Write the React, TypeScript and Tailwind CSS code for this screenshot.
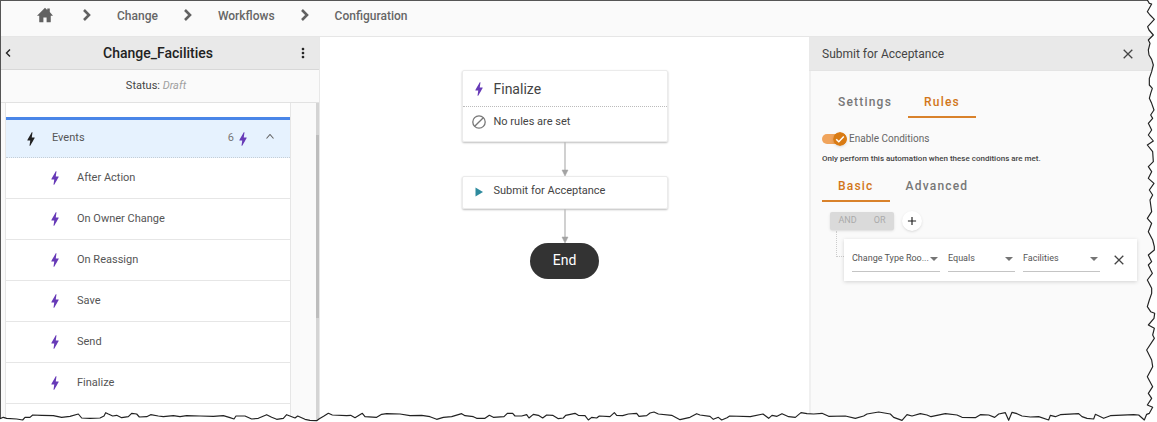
import { useState } from 'react';
import type { ReactNode } from 'react';
import { MdAdd, MdBolt, MdClose, MdMoreVert } from 'react-icons/md';

const events = ['After Action', 'On Owner Change', 'On Reassign', 'Save', 'Send', 'Finalize'];
const crumbs = ['Change', 'Workflows', 'Configuration'];

// Torn paper outline, three units to a pixel
const tornBottom =
    '0,1256 10,1252 20,1255 50,1257 68,1260 75,1252 90,1252 98,1245 125,1246 160,1247 185,1252 210,1249 235,1242 245,1254 270,1255 300,1254 312,1248 317,1238 325,1242 338,1248 350,1246 365,1253 385,1250 395,1240 410,1242 418,1251 440,1250 452,1244 475,1248 490,1250 520,1247 540,1250 560,1247 600,1248 640,1249 670,1247 690,1253 702,1257 708,1248 735,1248 755,1257 775,1255 800,1244 815,1252 830,1258 850,1255 860,1244 885,1254 893,1248 ' +
    '915,1258 930,1261 950,1262 958,1256 972,1248 985,1240 997,1245 1040,1247 1052,1246 1065,1253 1087,1240 1095,1250 1130,1252 1145,1243 1160,1241 1200,1242 1230,1247 1265,1246 1290,1250 1310,1258 1330,1252 1355,1250 1385,1241 1395,1247 1420,1250 1430,1255 1455,1255 1468,1246 1480,1252 1512,1250 1522,1240 1538,1240 1545,1248 1565,1248 1580,1244 1587,1254 1600,1243 1615,1246 1628,1254 1640,1245 1658,1246 1675,1256 1690,1254 1697,1246 1725,1240 1735,1246 1755,1247 1765,1260 1775,1252 1790,1254 1798,1248 1830,1250 1843,1238 1850,1246 1868,1247 1885,1242 1910,1240 1917,1249 1940,1247 1950,1239 1962,1236 1975,1242 2015,1246 2040,1259 2070,1252 2090,1241 2100,1245 2130,1249 2140,1258 2155,1252 2165,1260 ' +
    '2181,1253 2189,1248 2251,1250 2289,1242 2306,1255 2316,1246 2331,1249 2346,1241 2366,1250 2386,1252 2403,1238 2421,1241 2441,1242 2466,1240 2486,1249 2536,1248 2566,1255 2591,1248 2601,1242 2636,1236 2671,1242 2681,1252 2706,1261 2721,1244 2736,1248 2761,1241 2781,1245 2793,1250 2836,1241 2871,1245 2886,1252 2926,1253 2941,1244 2966,1245 2984,1252 2996,1242 3016,1238 3026,1261 3036,1237 3051,1241 3066,1248 3091,1251 3116,1250 3146,1260 3151,1246 3166,1250 3181,1244 3236,1241 3246,1250 3261,1255 3281,1257 3286,1243 3311,1255 3331,1247 3401,1244 3416,1245 3433,1260';
const tornRight =
    '3440,1243 3448,1240 3458,1222 3442,1215 3455,1195 3445,1180 3458,1160 3442,1130 3458,1100 3455,1080 3440,1050 3463,1015 3458,1005 3463,985 3445,975 3462,955 3464,940 3452,935 3442,920 3448,900 3455,880 3455,865 3442,840 3457,820 3452,810 3445,795 3455,785 3445,765 3463,750 3463,740 3458,720 3445,695 3455,670 3442,655 3455,635 3450,600 ' +
    '3458,585 3448,570 3462,550 3445,535 3455,515 3445,500 3460,485 3458,455 3442,435 3460,423 3445,405 3455,390 3445,370 3458,355 3452,345 3462,330 3455,310 3448,295 3452,280 3457,265 3448,255 3448,235 3455,215 3460,195 3455,178 3447,165 3445,150 3450,130 3445,120 3460,105 3447,90 3443,80 3452,70 3463,58 3450,45 3442,35 3455,12 3448,10 3442,0';

const TornEdge = () => (
    <svg viewBox="0 0 3471 1266" preserveAspectRatio="none" className="absolute inset-0 h-full w-full pointer-events-none" aria-hidden="true">
        <polygon points={`0,1266 ${tornBottom} ${tornRight} 3471,0 3471,1266`} fill="#fff" />
        <polyline points={`${tornBottom} ${tornRight}`} fill="none" stroke="#222" strokeWidth="3.5" strokeLinejoin="round" />
    </svg>
);

const HomeIcon = () => (
    <svg viewBox="0 0 50 46" className="h-4 w-4" fill="#616161">
        <path d="M25 0 0 25h7v19q0 2 2 2h11V31h10v15h11q2 0 2-2V25h7L40 14V3h-8v4z" />
    </svg>
);

const Chevron = () => (
    <svg viewBox="0 0 8 12" className="h-3 w-2" fill="none" stroke="#616161" strokeWidth="2.6">
        <path d="m1 1 5 5-5 5" />
    </svg>
);

const Arrow = () => (
    <svg viewBox="0 0 8 34" className="h-[34px] w-2 shrink-0">
        <path d="M4 0v28" stroke="#bdbdbd" strokeWidth="1.4" />
        <path d="M1 28h6l-3 6z" fill="#a3a3a3" stroke="#a3a3a3" strokeWidth=".5" />
    </svg>
);

const CloseIcon = () => (
    <svg viewBox="0 0 10 10" className="h-[10px] w-[10px]" fill="none" stroke="#444" strokeWidth="1.3">
        <path d="m.7.7 8.600 8.600M9.300.7.7 9.300" />
    </svg>
);

const Breadcrumbs = () => (
    <nav className="flex h-9 shrink-0 items-center border-b border-[#e6e6e6] bg-[#fafafa] pb-2 pl-9 text-xs font-medium text-[#666]">
        <a href="#home" aria-label="Home" className="mr-1">
            <HomeIcon />
        </a>
        <ol className="flex items-center">
            {crumbs.map((crumb) => (
                <li key={crumb} className="flex items-center">
                    <span className="mr-[26px] ml-[26px]">
                        <Chevron />
                    </span>
                    <a href={`#${crumb}`} className="pt-[2px]">
                        {crumb}
                    </a>
                </li>
            ))}
        </ol>
    </nav>
);

const Sidebar = () => (
    <aside className="flex w-[319px] shrink-0 flex-col border-r border-[#e8e8e8] bg-[#fafafa]">
        <div className="flex h-[33px] shrink-0 items-center justify-between border-b border-[#d8d8d8] bg-[#e9e9e9] pr-2 pl-1 text-[#222]">
            <button type="button" aria-label="Back" className="w-4">
                <svg viewBox="0 0 6 8" className="h-2 w-[6px]" fill="none" stroke="#222" strokeWidth="1.4">
                    <path d="M5 .5 1.5 4 5 7.5" />
                </svg>
            </button>
            <h1 className="text-sm font-medium">Change_Facilities</h1>
            <button type="button" aria-label="More options">
                <MdMoreVert size={16} />
            </button>
        </div>
        <p className="h-[33px] shrink-0 border-b border-[#e2e2e2] pr-2 text-center text-[11px] leading-8 text-[#444]">
            Status: <em className="text-[#a0a0a0]">Draft</em>
        </p>
        <div className="flex min-h-0 grow justify-between overflow-hidden pl-1">
            <div className="w-[286px] border-x border-[#e6e6e6] bg-white text-[11px] text-[#555]">
                <div className="h-[14px]" />
                <button type="button" aria-expanded="true" className="flex h-[41px] w-full items-center border-t-3 border-b border-t-[#4a86e8] border-b-[#c5ced6] bg-[#e6f2fe] pr-4 pl-4 [border-bottom-style:dotted]">
                    <MdBolt size={18} className="text-[#222]" />
                    <span className="ml-3 grow text-left">Events</span>
                    <span className="text-[#777]">6</span>
                    <MdBolt size={18} className="mr-[14px] text-[#673ab7]" />
                    <svg viewBox="0 0 8 5" className="mb-1 h-[5px] w-2" fill="none" stroke="#666" strokeWidth="1.1">
                        <path d="m.5 4.5 3.5-4 3.5 4" />
                    </svg>
                </button>
                <ul>
                    {events.map((event) => (
                        <li key={event} className="flex h-[41px] items-center border-b border-[#e6e6e6] pl-10">
                            <MdBolt size={18} className="text-[#673ab7]" />
                            <span className="ml-[13px]">{event}</span>
                        </li>
                    ))}
                </ul>
            </div>
            <div className="w-[3px] bg-[#d4d4d4] pt-8">
                <div className="h-[183px] bg-[#bdbdbd]" />
            </div>
        </div>
    </aside>
);

const Canvas = () => (
    <main className="flex min-w-0 grow flex-col items-center bg-white pt-[33px] text-[11px] text-[#444]">
        <section className="w-[206px] rounded-xs border border-[#ebebeb] shadow-[0_1px_2px_rgba(0,0,0,0.25)]">
            <div className="flex h-9 items-center border-b border-dotted border-[#bbb] pl-[7px]">
                <MdBolt size={18} className="text-[#673ab7]" />
                <h2 className="ml-[6px] text-sm">Finalize</h2>
            </div>
            <div className="flex h-[34px] items-center pb-1 pl-[9px]">
                <svg viewBox="0 0 14 14" className="h-[14px] w-[14px]" fill="none" stroke="#777" strokeWidth="1.3">
                    <circle cx="7" cy="7" r="6.2" />
                    <path d="m2.7 11.3 8.6-8.6" />
                </svg>
                <span className="ml-2">No rules are set</span>
            </div>
        </section>
        <Arrow />
        <section className="flex h-[33px] w-[206px] items-center rounded-xs border border-[#ebebeb] pb-[2px] pl-3 shadow-[0_1px_2px_rgba(0,0,0,0.25)]">
            <svg viewBox="0 0 8 10" className="h-[10px] w-2" fill="#2e8b9e">
                <path d="M.5.5 8 5 .5 9.500z" />
            </svg>
            <span className="ml-[11px]">Submit for Acceptance</span>
        </section>
        <Arrow />
        <div className="flex h-9 w-[69px] shrink-0 items-center justify-center rounded-full bg-[#333] pb-[2px] text-sm text-white">End</div>
    </main>
);

interface TabsProps {
    tabs: string[];
    initial: string;
}

const Tabs = ({ tabs, initial }: TabsProps) => {
    const [active, setActive] = useState(initial);
    return (
        <div role="tablist" className="flex text-xs font-medium tracking-widest">
            {tabs.map((tab) => (
                <button
                    key={tab}
                    type="button"
                    role="tab"
                    aria-selected={tab === active}
                    onClick={() => setActive(tab)}
                    className={`h-[31px] border-b-2 px-4 ${tab === active ? 'border-[#d9822b] text-[#d27619]' : 'border-transparent text-[#777]'}`}
                >
                    {tab}
                </button>
            ))}
        </div>
    );
};

interface FieldProps {
    label: string;
    value: string;
    width: string;
}

const Field = ({ label, value, width }: FieldProps) => (
    <label className={`flex shrink-0 items-center border-b border-[#c4c4c4] pb-[2px] ${width}`}>
        <select aria-label={label} defaultValue={value} className="h-5 min-w-0 grow appearance-none text-[9px] text-[#555] outline-none">
            <option>{value}</option>
        </select>
        <svg viewBox="0 0 8 4" className="mr-[2px] h-1 w-2 shrink-0" fill="#757575">
            <path d="M0 0h8L4 4z" />
        </svg>
    </label>
);

const Switch = ({ children }: { children: ReactNode }) => {
    const [checked, setChecked] = useState(true);
    return (
        <label className="flex items-center gap-[2px] text-[10px] leading-4 text-[#666]">
            <input type="checkbox" className="sr-only" checked={checked} onChange={(e) => setChecked(e.target.checked)} />
            <span className={`flex h-[10px] w-[25px] items-center rounded-full ${checked ? 'justify-end bg-[#f0a45c]' : 'bg-[#bbb]'}`}>
                <svg viewBox="0 0 14 14" className="h-[14px] w-[14px] shrink-0 rounded-full shadow">
                    <circle cx="7" cy="7" r="7" fill={checked ? '#d97b14' : '#fafafa'} />
                    {checked && <path d="m3.200 7.200 2.600 2.600 5-5.200" fill="none" stroke="#fff" strokeWidth="1.500" />}
                </svg>
            </span>
            {children}
        </label>
    );
};

const RulesPanel = () => (
    <aside className="w-[348px] shrink-0 bg-[#fafafa]">
        <div className="flex h-[34px] items-center justify-between border-b border-[#e4e4e4] bg-[#e9e9e9] pr-6 pl-[13px] text-[#444]">
            <h2 className="text-xs">Submit for Acceptance</h2>
            <button type="button" aria-label="Close">
                <CloseIcon />
            </button>
        </div>
        <div className="h-full border-l-2 border-[#f0f0f0] pt-4 pl-[11px]">
            <Tabs tabs={['Settings', 'Rules']} initial="Rules" />
            <div className="pt-[13px]">
                <Switch>Enable Conditions</Switch>
            </div>
            <p className="mt-1 text-[8px] leading-4 font-medium text-[#444]">Only perform this automation when these conditions are met.</p>
            <div className="pt-1">
                <Tabs tabs={['Basic', 'Advanced']} initial="Basic" />
            </div>
            <div className="mt-[9px] flex items-center gap-2 pl-2">
                <div className="flex h-[18px] w-16 items-center justify-around rounded-xs bg-[#dadada] text-[9px] text-[#aaa] shadow">
                    <button type="button" disabled>
                        AND
                    </button>
                    <button type="button" disabled>
                        OR
                    </button>
                </div>
                <button type="button" aria-label="Add condition" className="flex h-5 w-5 items-center justify-center rounded-full bg-white text-[#222] shadow">
                    <MdAdd size={14} />
                </button>
            </div>
            <div className="flex pl-[14px]">
                <div className="h-[26px] w-2 border-b border-l border-dotted border-[#ccc]" />
                <div className="mt-2 flex h-[42px] w-[293px] items-center gap-2 bg-white pl-2 shadow-[0_1px_4px_rgba(0,0,0,0.16)]">
                    <Field label="Attribute" value="Change Type Roo..." width="w-[88px]" />
                    <Field label="Operator" value="Equals" width="w-[67px]" />
                    <Field label="Value" value="Facilities" width="w-[77px]" />
                    <button type="button" aria-label="Remove condition" className="ml-[6px]">
                        <CloseIcon />
                    </button>
                </div>
            </div>
        </div>
    </aside>
);

const App = () => (
    <div className="relative h-screen overflow-hidden bg-white font-['Roboto','Liberation_Sans',sans-serif]">
        <div className="flex h-full flex-col border-t border-l border-[#555]">
            <Breadcrumbs />
            <div className="flex min-h-0 grow overflow-hidden">
                <Sidebar />
                <Canvas />
                <RulesPanel />
            </div>
        </div>
        <TornEdge />
    </div>
);

export default App;
